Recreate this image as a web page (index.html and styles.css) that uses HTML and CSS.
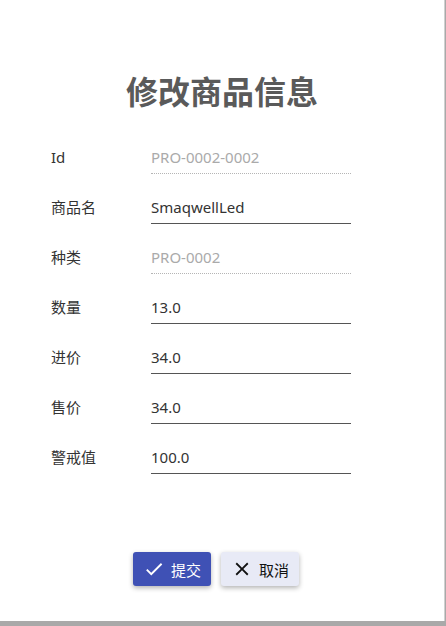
FILE: index.html
```html
<!DOCTYPE html>
<html lang="zh">
<head>
<meta charset="utf-8">
<link rel="stylesheet" href="styles.css">
</head>
<body>
<div class="dialog">
  <h1 class="title">修改商品信息</h1>
  <div class="form">
    <div class="row"><span class="label">Id</span><span class="field disabled">PRO-0002-0002</span></div>
    <div class="row"><span class="label">商品名</span><span class="field">SmaqwellLed</span></div>
    <div class="row"><span class="label">种类</span><span class="field disabled">PRO-0002</span></div>
    <div class="row"><span class="label">数量</span><span class="field">13.0</span></div>
    <div class="row"><span class="label">进价</span><span class="field">34.0</span></div>
    <div class="row"><span class="label">售价</span><span class="field">34.0</span></div>
    <div class="row"><span class="label">警戒值</span><span class="field">100.0</span></div>
  </div>
  <div class="actions">
    <button class="btn primary"><svg class="icon" viewBox="0 0 24 24"><path d="M9 16.17L4.83 12l-1.42 1.41L9 19 21 7l-1.41-1.41z"/></svg><span>提交</span></button>
    <button class="btn secondary"><svg class="icon" viewBox="0 0 24 24"><path d="M19 6.41L17.59 5 12 10.59 6.41 5 5 6.41 10.59 12 5 17.59 6.41 19 12 13.41 17.59 19 19 17.59 13.41 12z"/></svg><span>取消</span></button>
  </div>
</div>
</body>
</html>
```
FILE: styles.css
```css
html, body {
  margin: 0;
  padding: 0;
}
body {
  background: #a9a9a9;
  width: 446px;
  height: 626px;
  overflow: hidden;
  font-family: "Noto Sans", "Noto Sans CJK SC", sans-serif;
}
.dialog {
  width: 444px;
  height: 621px;
  background: #fff;
  border-right: 1px solid #d0d0d0;
  display: flex;
  flex-direction: column;
}
.title {
  margin: 70px 0 0;
  font-size: 32px;
  line-height: 40px;
  font-weight: 700;
  color: #5a5a5a;
  text-align: center;
  font-family: "Noto Sans CJK SC", sans-serif;
}
.form {
  margin-top: 14px;
  padding-left: 51px;
  display: flex;
  flex-direction: column;
}
.row {
  height: 50px;
  display: flex;
  align-items: flex-end;
}
.label {
  width: 100px;
  font-size: 15px;
  line-height: 20px;
  padding-bottom: 7px;
  color: #333;
}
.field {
  width: 200px;
  font-size: 15px;
  line-height: 20px;
  padding-bottom: 6px;
  color: #333;
  border-bottom: 1px solid #555;
}
.field.disabled {
  color: #aaa;
  border-bottom: 1px dotted #b5b5b5;
}
.actions {
  margin-top: 78px;
  display: flex;
  justify-content: center;
  gap: 10px;
  padding-right: 12px;
}
.btn {
  width: 78px;
  height: 34px;
  border: none;
  border-radius: 3px;
  display: flex;
  align-items: center;
  justify-content: center;
  gap: 6px;
  font-family: "Noto Sans CJK SC", sans-serif;
  font-size: 15px;
  padding: 0;
  box-shadow: 0 2px 5px rgba(0,0,0,0.3);
}
.btn .icon {
  width: 22px;
  height: 22px;
}
.primary {
  background: #3f51b5;
  color: #fff;
}
.primary .icon { fill: #fff; }
.secondary {
  background: #e8eaf6;
  color: #111;
}
.secondary .icon { fill: #111; }
```
